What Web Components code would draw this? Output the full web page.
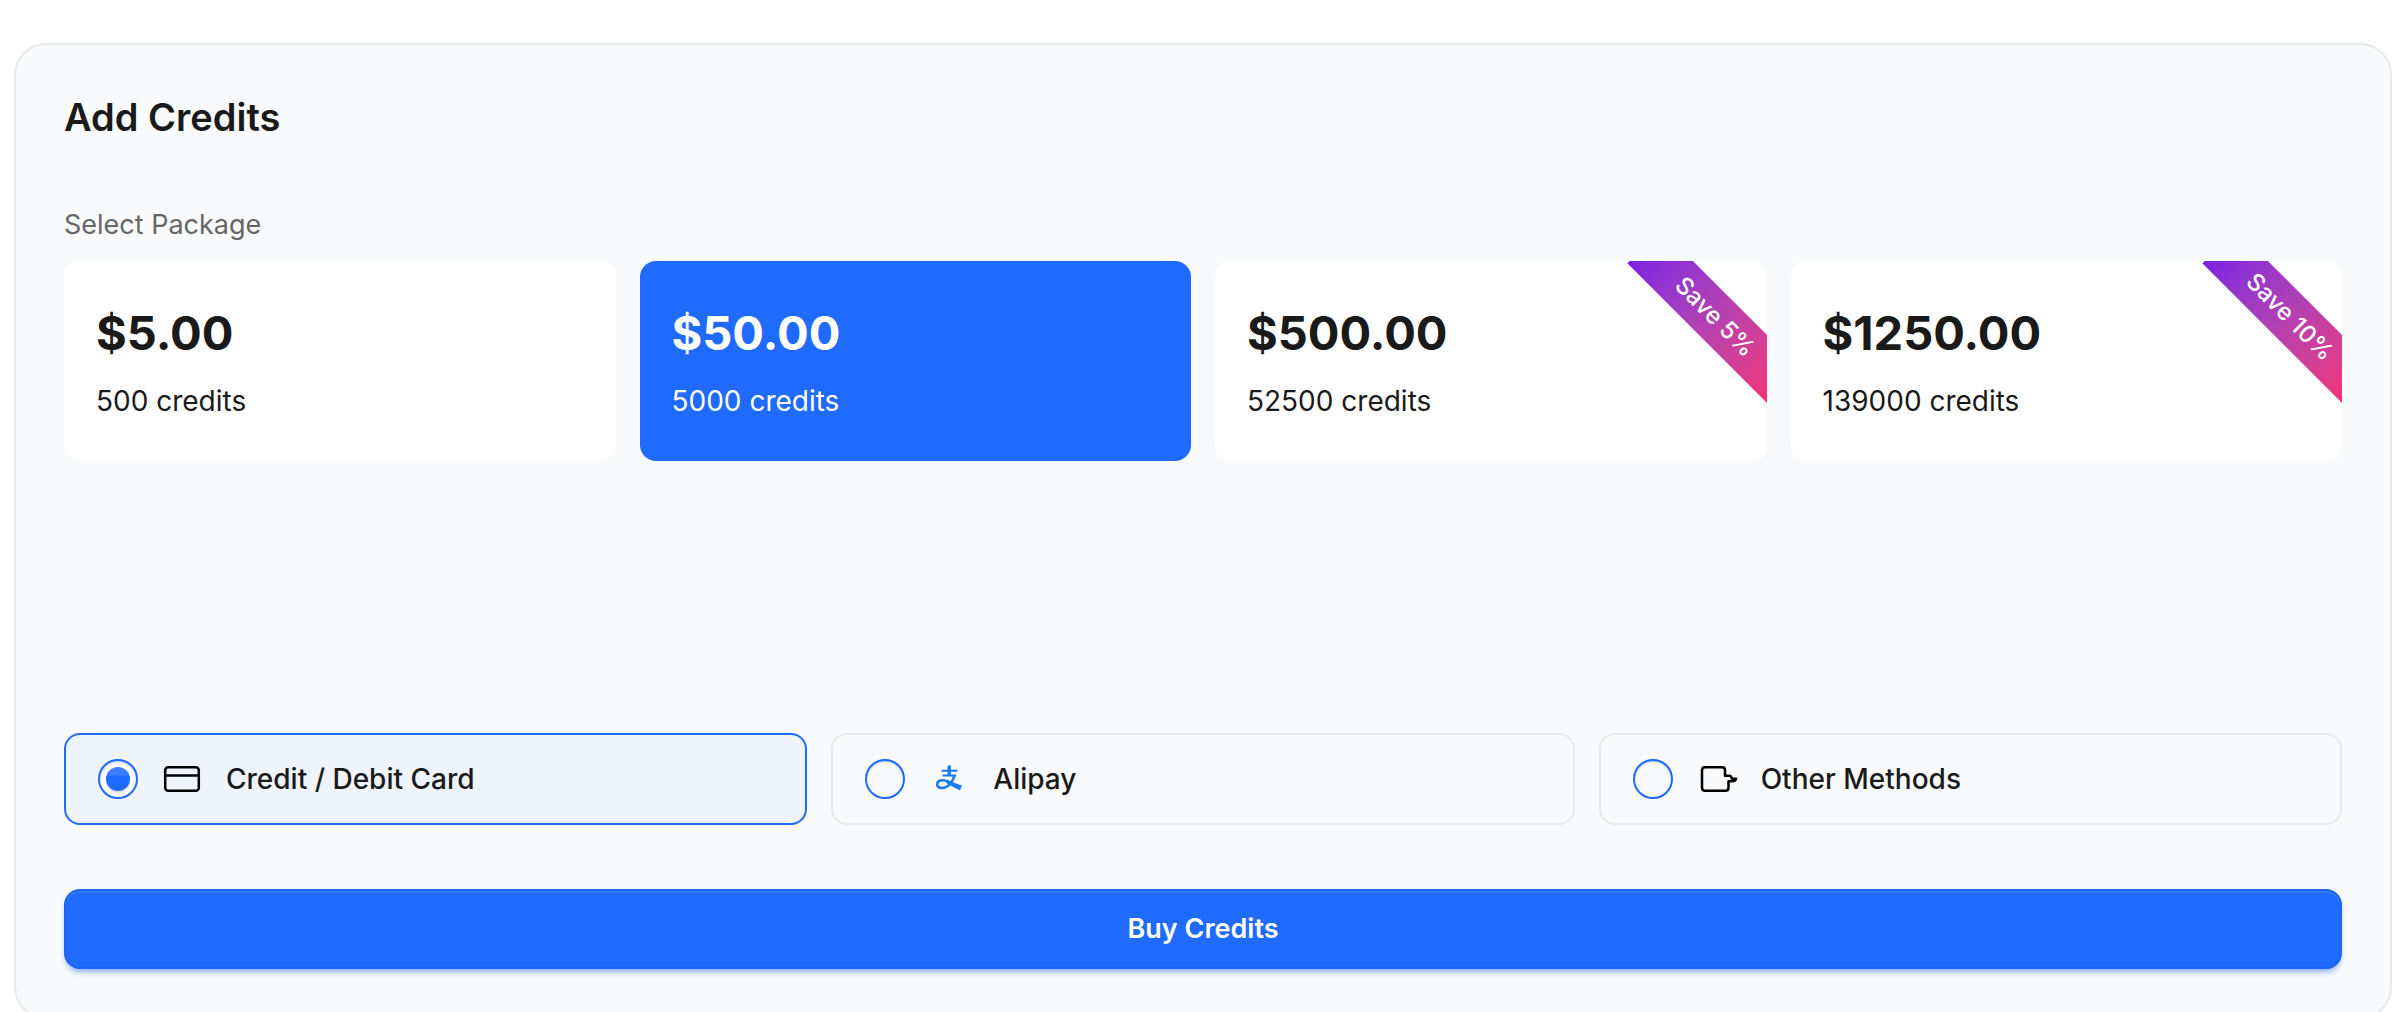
<!DOCTYPE html>
<html lang="en">
<head>
<meta charset="utf-8">
<meta name="viewport" content="width=device-width, initial-scale=1">
<title>Add Credits</title>
<style>
    html {
        overflow-x: hidden;
        scrollbar-width: none;
    }

    body {
        margin: 0;
        padding: 43px 16px 0 14px;
        background: #fff;
        color: #1a1a1a;
        font-family: Inter, "Liberation Sans", sans-serif;
        font-size: 28px;
        line-height: 40px;
        --primary: #1f6aff;
        --surface: #f9fafc;
        --line: #e8e9eb;
    }
</style>
</head>
<body>
<credits-panel heading="Add Credits">
    <package-list label="Select Package">
        <package-option price="$5.00">500 credits</package-option>
        <package-option price="$50.00" selected>5000 credits</package-option>
        <package-option price="$500.00" save="Save 5%">52500 credits</package-option>
        <package-option price="$1250.00" save="Save 10%">139000 credits</package-option>
    </package-list>
    <payment-methods>
        <payment-option icon="card" checked>Credit / Debit Card</payment-option>
        <payment-option icon="alipay">Alipay</payment-option>
        <payment-option icon="other">Other Methods</payment-option>
    </payment-methods>
    <buy-button>Buy Credits</buy-button>
</credits-panel>

<script>
class CreditsPanel extends HTMLElement {
    constructor() {
        super();
        this.attachShadow({ mode: 'open' });
    }

    connectedCallback() {
        this.shadowRoot.innerHTML = `
        <style>
            :host {
                display: block;
            }

            section {
                display: flex;
                flex-direction: column;
                gap: 64px;
                padding: 48px;
                background: var(--surface);
                border: 2px solid var(--line);
                border-radius: 32px;
            }

            h2 {
                margin: 0;
                font-size: 38px;
                font-weight: 600;
                line-height: 48px;
            }
        </style>
        <section>
            <h2>${this.getAttribute('heading')}</h2>
            <slot></slot>
        </section>
        `;
    }
}

class PackageList extends HTMLElement {
    constructor() {
        super();
        this.attachShadow({ mode: 'open' });
    }

    connectedCallback() {
        this.shadowRoot.innerHTML = `
        <style>
            :host {
                display: flex;
                flex-direction: column;
                gap: 16px;
                padding-bottom: 208px;
            }

            .label {
                color: #666;
                font-size: 27px;
            }

            .grid {
                display: grid;
                grid-template-columns: repeat(4, 1fr);
                gap: 24px;
            }
        </style>
        <div class="label" id="label">${this.getAttribute('label')}</div>
        <div class="grid" role="group" aria-labelledby="label"><slot></slot></div>
        `;

        this.addEventListener('click', (e) => {
            const picked = e.target.closest('package-option');
            if (!picked) return;
            this.querySelectorAll('package-option').forEach((p) => {
                p.toggleAttribute('selected', p === picked);
            });
        });
    }
}

class PackageOption extends HTMLElement {
    constructor() {
        super();
        this.attachShadow({ mode: 'open' });
    }

    connectedCallback() {
        const save = this.getAttribute('save');
        this.shadowRoot.innerHTML = `
        <style>
            :host {
                display: block;
            }

            button {
                position: relative;
                display: flex;
                flex-direction: column;
                align-items: flex-start;
                gap: 16px;
                width: 100%;
                padding: 40px 32px;
                overflow: hidden;
                background: #fff;
                border: 0;
                border-radius: 16px;
                color: inherit;
                font: inherit;
                text-align: left;
                cursor: pointer;
            }

            :host([selected]) button {
                background: var(--primary);
                color: #fff;
            }

            .price {
                font-size: 47px;
                font-weight: 700;
                line-height: 64px;
            }

            .ribbon {
                position: absolute;
                top: 32px;
                right: -48px;
                width: 200px;
                line-height: 48px;
                background: linear-gradient(to right in oklab, #7c1fe3, #f43274);
                color: #fff;
                font-size: 24px;
                font-weight: 500;
                text-align: center;
                transform: rotate(45deg);
            }
        </style>
        <button type="button">
            <span class="price">${this.getAttribute('price')}</span>
            <span><slot></slot></span>
            ${save ? `<span class="ribbon">${save}</span>` : ''}
        </button>
        `;
    }
}

class PaymentMethods extends HTMLElement {
    constructor() {
        super();
        this.attachShadow({ mode: 'open' });
    }

    connectedCallback() {
        this.shadowRoot.innerHTML = `
        <style>
            :host {
                display: grid;
                grid-template-columns: repeat(3, 1fr);
                gap: 24px;
            }
        </style>
        <slot></slot>
        `;

        // radios live in separate shadow roots, so the group is kept in sync here
        this.addEventListener('pick', (e) => {
            this.querySelectorAll('payment-option').forEach((o) => {
                o.toggleAttribute('checked', o === e.target);
                o.radio.checked = o === e.target;
            });
        });
    }
}

const ICONS = {
    card: `
        <g fill="none" stroke="#000" stroke-width="2.5">
            <rect x="3.200" y="8.200" width="33.600" height="23.600" rx="3"/>
            <path d="M3 16.500H37"/>
        </g>`,
    alipay: `
        <g fill="none" stroke="#1677ff">
            <path d="M20.200 6.500V17" stroke-width="3.400"/>
            <path d="M12.500 11.800H28.500M13.500 16.400H27" stroke-width="2"/>
            <path d="M25.500 16.500C24.800 19.500 23.500 22 21.500 24.500C19 27.500 15.500 29 12.500 29C9.800 29 8.300 27.600 8.300 25.500C8.300 22.800 10.500 21.300 13.500 21.300C15.500 21.300 17.500 21.800 20 22.800" stroke-width="2.600"/>
        </g>
        <path fill="#1677ff" d="M17 20.800C21 22.200 25.500 24.300 33 26.500L31 31.200C26.500 29.500 22.500 27 17 23.800Z"/>`,
    other: `
        <path fill="none" stroke="#000" stroke-width="2.500" stroke-linejoin="round"
            d="M8 8.200H25Q28 8.200 28 11V16.800H32Q34.500 16.800 34.800 19.800H39Q38.200 22.200 35.500 22.200H31.500V28.800Q31.500 31.800 28.500 31.800H8Q5 31.800 5 28.800V11.200Q5 8.200 8 8.200Z"/>`
};

class PaymentOption extends HTMLElement {
    constructor() {
        super();
        this.attachShadow({ mode: 'open' });
    }

    connectedCallback() {
        this.shadowRoot.innerHTML = `
        <style>
            :host {
                display: block;
            }

            label {
                display: flex;
                align-items: center;
                gap: 24px;
                padding: 24px 32px;
                border: 2px solid var(--line);
                border-radius: 16px;
                font-weight: 500;
                cursor: pointer;
            }

            :host([checked]) label {
                background: #eef3fc;
                border-color: var(--primary);
            }

            input {
                display: grid;
                place-items: center;
                flex: none;
                appearance: none;
                box-sizing: border-box;
                width: 40px;
                height: 40px;
                margin: 0;
                border: 2px solid var(--primary);
                border-radius: 50%;
                box-shadow: inset 0 2px 1px rgba(0, 0, 0, 0.1);
                cursor: pointer;
            }

            input:checked {
                background: var(--surface);
            }

            input:checked::before {
                content: "";
                width: 24px;
                height: 24px;
                border-radius: 50%;
                background: linear-gradient(#3d7dff 8px, var(--primary) 9px);
                box-shadow: 0 2px 1px rgba(0, 0, 0, 0.1);
            }

            svg {
                flex: none;
                width: 40px;
                height: 40px;
                overflow: visible;
            }
        </style>
        <label>
            <input type="radio" name="method" ${this.hasAttribute('checked') ? 'checked' : ''}>
            <svg viewBox="0 0 40 40" aria-hidden="true">${ICONS[this.getAttribute('icon')]}</svg>
            <span><slot></slot></span>
        </label>
        `;
        this.radio = this.shadowRoot.querySelector('input');
        this.radio.addEventListener('change', () => {
            this.dispatchEvent(new CustomEvent('pick', { bubbles: true }));
        });
    }
}

class BuyButton extends HTMLElement {
    constructor() {
        super();
        this.attachShadow({ mode: 'open' });
    }

    connectedCallback() {
        this.shadowRoot.innerHTML = `
        <style>
            :host {
                display: block;
            }

            button {
                display: block;
                width: 100%;
                padding: 18px 32px;
                background: var(--primary);
                border: 2px solid #1d64f0;
                border-radius: 16px;
                box-shadow:
                    inset 0 2px 0 rgba(255, 255, 255, 0.1),
                    0 4px 6px -2px rgba(31, 106, 255, 0.4),
                    0 6px 6px -4px rgba(31, 106, 255, 0.3);
                color: #fff;
                font: inherit;
                font-size: 27px;
                font-weight: 600;
                cursor: pointer;
            }
        </style>
        <button type="button"><slot></slot></button>
        `;
    }
}

customElements.define('credits-panel', CreditsPanel);
customElements.define('package-list', PackageList);
customElements.define('package-option', PackageOption);
customElements.define('payment-methods', PaymentMethods);
customElements.define('payment-option', PaymentOption);
customElements.define('buy-button', BuyButton);
</script>
</body>
</html>
